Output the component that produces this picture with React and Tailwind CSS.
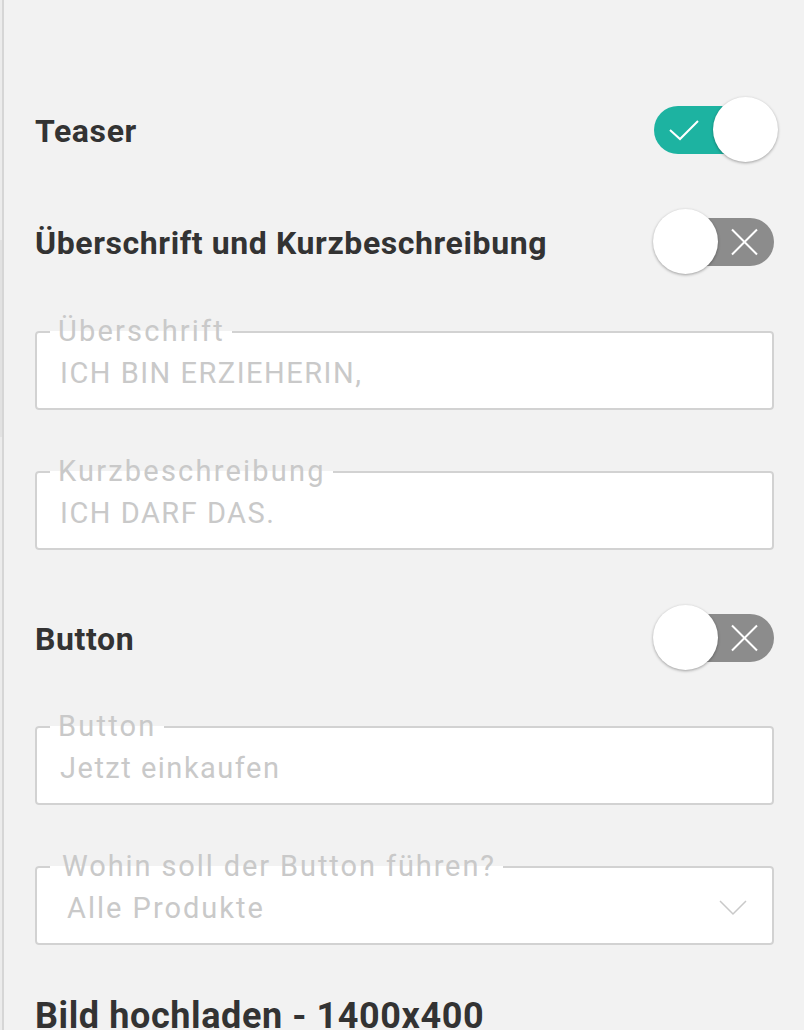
import React from "react";

const font = { fontFamily: "Roboto, 'Noto Sans', sans-serif" };

function Toggle({ on }) {
  return (
    <div className="relative w-[121px] h-[65px] shrink-0">
      <div
        className={
          "absolute left-[1px] top-[9px] w-[120px] h-[48px] rounded-full " +
          (on ? "bg-[#1db3a1]" : "bg-[#8c8c8c]")
        }
      >
        {on ? (
          <svg className="absolute left-0 top-0" width="120" height="48" viewBox="0 0 120 48">
            <polyline points="16,24 26,33 44,15" fill="none" stroke="#ffffff" strokeWidth="2" />
          </svg>
        ) : (
          <svg className="absolute left-0 top-0" width="120" height="48" viewBox="0 0 120 48">
            <line x1="78" y1="11.5" x2="103" y2="36.5" stroke="#ffffff" strokeWidth="2" />
            <line x1="103" y1="11.5" x2="78" y2="36.5" stroke="#ffffff" strokeWidth="2" />
          </svg>
        )}
      </div>
      <div
        className={
          "absolute top-0 w-[65px] h-[65px] rounded-full bg-white shadow-[0_1px_3px_rgba(0,0,0,0.35)] " +
          (on ? "left-[60px]" : "left-0")
        }
      />
    </div>
  );
}

function Row({ title, on }) {
  return (
    <div className="flex items-center justify-between">
      <div className="text-[32px] font-bold text-[#333333] leading-[40px] tracking-[0.6px] pt-[2px]">{title}</div>
      <Toggle on={on} />
    </div>
  );
}

function Field({ label, value, select }) {
  return (
    <fieldset className="border-2 border-[#d2d2d2] rounded-[4px] bg-white px-[13px] pb-[18px]">
      <legend
        className={
          "text-[29px] leading-[30px] pb-[2px] text-[#c9c9c9] " +
          (select ? "pl-[12px] pr-[7px] tracking-[1.9px]" : "pl-[8px] pr-[7px] tracking-[2.2px]")
        }
      >
        {label}
      </legend>
      <div className={"flex items-center justify-between mt-[8px] " + (select ? "pl-[17px]" : "pl-[10px]")}>
        <div className={"text-[29px] leading-[34px] text-[#c9c9c9] " + (select ? "tracking-[2px]" : "tracking-[1.5px]")}>
          {value}
        </div>
        {select && (
          <svg width="28" height="16" viewBox="0 0 28 16" className="mr-[12px]">
            <polyline points="1,1 14,14 27,1" fill="none" stroke="#c9c9c9" strokeWidth="1.5" />
          </svg>
        )}
      </div>
    </fieldset>
  );
}

export default function App() {
  return (
    <div className="min-h-screen bg-[#f2f2f2] flex" style={font}>
      <div className="w-[2px] bg-[#ececec] flex flex-col">
        <div className="h-[240px]" />
        <div className="h-[197px] bg-[#e2e2e2]" />
      </div>
      <div className="w-[2px] bg-[#d6d6d6]" />
      <div className="flex-1 pl-[31px] pr-[30px] pt-[97px] flex flex-col">
        <Row title="Teaser" on />
        <div className="h-[47px]" />
        <Row title="Überschrift und Kurzbeschreibung" on={false} />
        <div className="h-[42px]" />
        <Field label="Überschrift" value="ICH BIN ERZIEHERIN," />
        <div className="h-[46px]" />
        <Field label="Kurzbeschreibung" value="ICH DARF DAS." />
        <div className="h-[55px]" />
        <Row title="Button" on={false} />
        <div className="h-[41px]" />
        <Field label="Button" value="Jetzt einkaufen" />
        <div className="h-[46px]" />
        <Field label="Wohin soll der Button führen?" value="Alle Produkte" select />
        <div className="h-[51px]" />
        <div className="text-[36px] font-bold text-[#333333] leading-[40px] tracking-[0.6px]">Bild hochladen - 1400x400</div>
      </div>
    </div>
  );
}
